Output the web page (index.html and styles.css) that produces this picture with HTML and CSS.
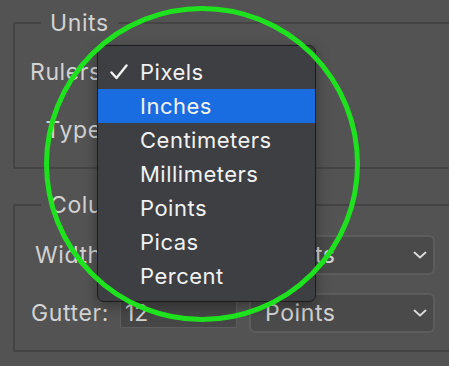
FILE: index.html
```html
<!DOCTYPE html>
<html lang="en">
<head>
    <meta charset="UTF-8">
    <title>Units &amp; Rulers</title>
    <link rel="stylesheet" href="styles.css">
</head>
<body>

    <div class="prefs">
        <!-- Gruppo unità -->
        <fieldset class="group group-units">
            <legend>Units</legend>
            <div class="row">
                <label class="row-label">Rulers:</label>
            </div>
            <div class="row">
                <label class="row-label">Type:</label>
            </div>
        </fieldset>

        <!-- Gruppo colonne -->
        <fieldset class="group group-columns">
            <legend>Columns</legend>
            <div class="row">
                <label class="row-label">Width:</label>
                <input class="num-field" type="text" value="180">
                <div class="select-box"><span>Points</span><svg class="chevron" viewBox="0 0 14 8"><polyline points="1.5,1.5 7,6.5 12.5,1.5"/></svg></div>
            </div>
            <div class="row">
                <label class="row-label">Gutter:</label>
                <input class="num-field" type="text" value="12">
                <div class="select-box"><span>Points</span><svg class="chevron" viewBox="0 0 14 8"><polyline points="1.5,1.5 7,6.5 12.5,1.5"/></svg></div>
            </div>
        </fieldset>
    </div>

    <!-- Menu a tendina aperto -->
    <ul class="popup-menu">
        <li class="menu-item checked"><svg class="check" viewBox="0 0 18 16"><polyline points="1.5,8.5 6.5,14 16.5,1.5"/></svg>Pixels</li>
        <li class="menu-item active">Inches</li>
        <li class="menu-item">Centimeters</li>
        <li class="menu-item">Millimeters</li>
        <li class="menu-item">Points</li>
        <li class="menu-item">Picas</li>
        <li class="menu-item">Percent</li>
    </ul>

    <!-- Cerchio di evidenziazione -->
    <div class="highlight-ring"></div>

</body>
</html>
```

FILE: styles.css
```css
/* Colori stile pannello preferenze */
:root {
    --bg: #535353;
    --group-border: #444;
    --label: #d2d2d2;
    --field-bg: #464646;
    --field-border: #5d5d5d;
    --menu-bg: #3d3f42;
    --menu-text: #f2f2f2;
    --accent: #1a6de0;
    --ring: #1fe21f;
}

html, body {
    margin: 0;
    height: 100%;
    overflow: hidden;
}

body {
    position: relative;
    background: var(--bg);
    font-family: Inter, "Noto Sans", sans-serif;
    color: var(--label);
    font-size: 23px;
    letter-spacing: 0.6px;
}

.prefs {
    padding: 11px 0 0 13px;
    width: 460px;
}

.group {
    margin: 0;
    padding: 0;
    border: 2px solid var(--group-border);
    border-radius: 2px;
    box-sizing: border-box;
}

.group legend {
    margin-left: 26px;
    padding: 0 9px;
    line-height: 24px;
    color: var(--label);
}

.group-units {
    height: 158px;
    padding-top: 8px;
}

.group-columns {
    margin-top: 24px;
    padding-top: 9px;
    height: 159px;
}

.row {
    display: flex;
    align-items: center;
    gap: 11px;
    height: 58px;
}

.row-label {
    width: 94px;
    text-align: right;
    flex: none;
}

.num-field {
    width: 117px;
    height: 30px;
    box-sizing: border-box;
    margin: 0 1px 0 0;
    padding: 0 4px;
    border: 1px solid var(--field-border);
    background: var(--field-bg);
    color: var(--label);
    font: inherit;
    outline: none;
}

.select-box {
    width: 186px;
    height: 40px;
    box-sizing: border-box;
    display: flex;
    align-items: center;
    justify-content: space-between;
    padding: 0 6px 0 14px;
    border: 2px solid var(--field-border);
    border-radius: 6px;
    background: #4a4a4a;
}

.chevron {
    width: 14px;
    height: 8px;
    fill: none;
    stroke: #dcdcdc;
    stroke-width: 1.8;
    stroke-linecap: round;
    stroke-linejoin: round;
}

/* Menu popup */
.popup-menu {
    position: absolute;
    left: 97px;
    top: 45px;
    width: 219px;
    margin: 0;
    padding: 9px 0 8px;
    box-sizing: border-box;
    list-style: none;
    background: var(--menu-bg);
    border: 1px solid #1c1c1c;
    border-radius: 7px;
    box-shadow: 0 4px 14px rgba(0, 0, 0, 0.35);
    font-size: 22px;
    letter-spacing: 0.5px;
}

.menu-item {
    position: relative;
    height: 34px;
    line-height: 34px;
    padding-left: 42px;
    color: var(--menu-text);
}

.menu-item.active {
    background: var(--accent);
}

.check {
    position: absolute;
    left: 12px;
    top: 9px;
    width: 18px;
    height: 16px;
    fill: none;
    stroke: var(--menu-text);
    stroke-width: 2.4;
    stroke-linecap: round;
    stroke-linejoin: round;
}

.highlight-ring {
    position: absolute;
    left: 44px;
    top: 6px;
    width: 306px;
    height: 306px;
    border: 5px solid var(--ring);
    border-radius: 50%;
}
```
